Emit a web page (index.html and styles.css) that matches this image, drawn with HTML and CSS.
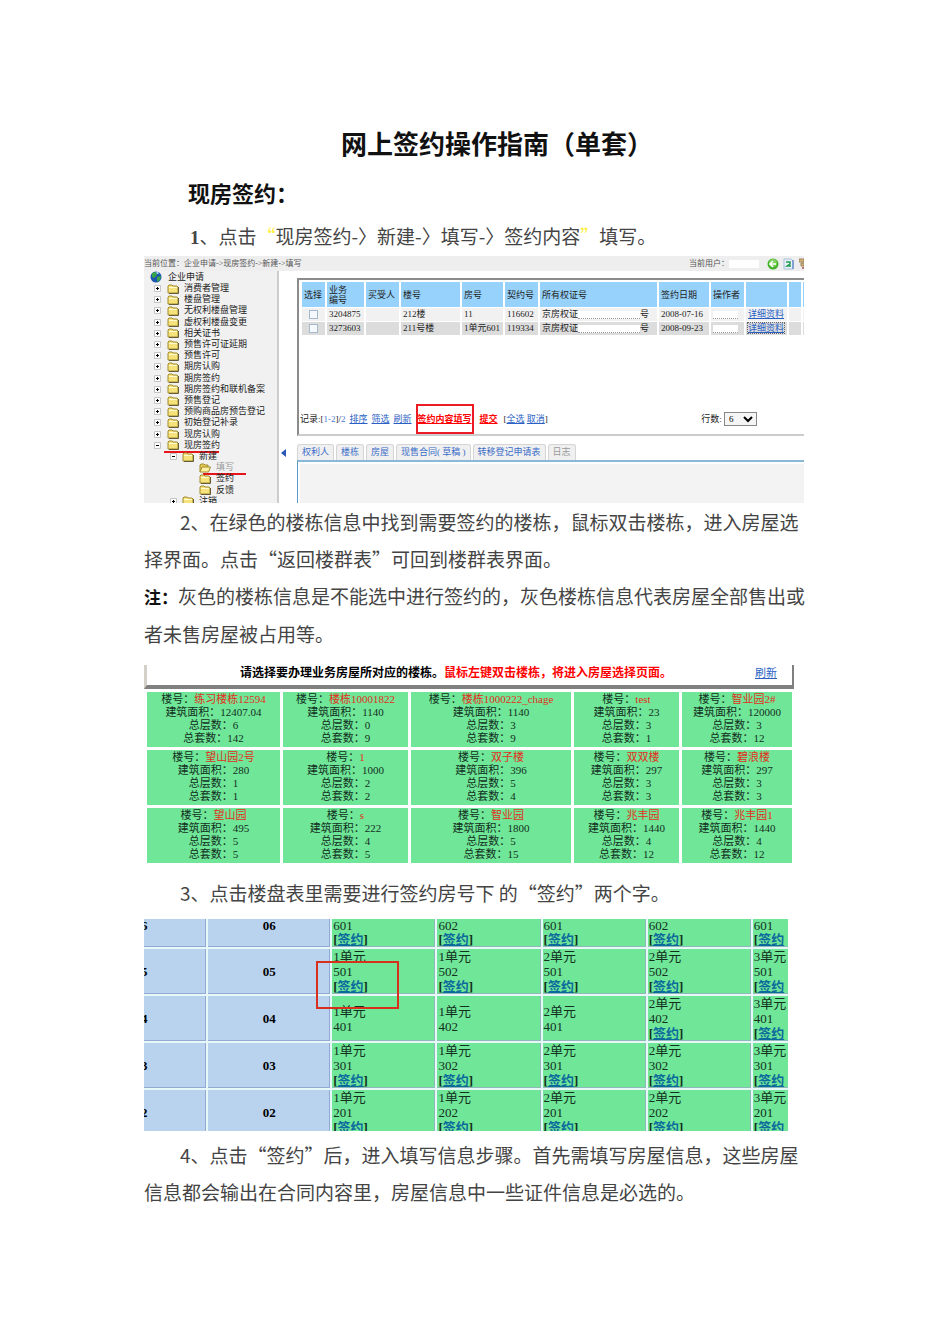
FILE: index.html
```html
<!DOCTYPE html>
<html lang="zh-CN">
<head>
  <meta charset="UTF-8" />
  <meta name="viewport" content="width=device-width, initial-scale=1.0" />
  <title>网上签约操作指南（单套）</title>
  <link rel="stylesheet" href="styles.css">
</head>
<body>
  <!-- shared icons -->
  <svg class="defs" width="0" height="0">
    <symbol id="folder" viewBox="0 0 12 10">
      <path d="M1 9V2l1-1h3l1 1h4l1 1v6z" fill="#f6e27a" stroke="#a08a2c"/>
      <path d="M2 3.5h8" stroke="#fffbd0"/>
      <path d="M11.5 3v6.5H2" fill="none" stroke="#4a4420" stroke-width=".8"/>
    </symbol>
    <symbol id="open" viewBox="0 0 12 10">
      <path d="M1 9V2l1-1h3l1 1h3v2" fill="#e8cc58" stroke="#a08a2c"/>
      <path d="M1 9l2-5h8.5L9.500 9z" fill="#fbf0a0" stroke="#a08a2c"/>
    </symbol>
    <symbol id="plus" viewBox="0 0 7 7">
      <path d="M.5.5h6v6h-6z" fill="#fff" stroke="#c4c4c4"/>
      <path d="M2 3.500h3M3.500 2v3" stroke="#000"/>
    </symbol>
    <symbol id="minus" viewBox="0 0 7 7">
      <path d="M.5.5h6v6h-6z" fill="#fff" stroke="#c4c4c4"/>
      <path d="M2 3.500h3" stroke="#000"/>
    </symbol>
  </svg>

  <main class="page">
    <h1>网上签约操作指南（单套）</h1>
    <h2>现房签约：</h2>
    <p class="step first"><b>1</b>、点击<span class="quote">“</span>现房签约-〉新建-〉填写-〉签约内容<span class="quote">”</span>填写。</p>

    <!-- system window -->
    <section class="app">
      <div class="topbar">
        <span class="crumb">当前位置：企业申请-&gt;现房签约-&gt;新建-&gt;填写</span>
        <span class="user">当前用户：<i class="mask name"></i></span>
        <svg width="12" height="12" viewBox="0 0 12 12"><circle cx="6" cy="6" r="5.500" fill="#43b02a"/><circle cx="6" cy="5" r="4" fill="#7cd15c"/><path d="M9 6H3.500M6 3L3 6l3 3" fill="none" stroke="#fff" stroke-width="1.600"/></svg>
        <svg width="12" height="12" viewBox="0 0 12 12"><path d="M1 1h7l2 2v8H1z" fill="#e8f2fc" stroke="#a9bfdc"/><path d="M3 4h4v2L4 8h4" fill="none" stroke="#239a50" stroke-width="1.500"/><path d="M10 2v9" stroke="#3a6dc0"/></svg>
        <svg width="5" height="12" viewBox="0 0 5 12"><path d="M0 1h5v3H0zM2 5h3v3H2z" fill="#dcb36c" stroke="#9b8464"/><path d="M3 9h2v2H3z" fill="#b77"/></svg>
      </div>
      <div class="work">
        <nav class="sidebar">
          <ul class="tree">
            <li class="root"><svg class="globe" viewBox="0 0 12 12"><circle cx="6" cy="6" r="5.500" fill="#1b55b0"/><path d="M2 2l4-1 1 3-3 3-2-1zM7 6l4-1-1 4-3 2z" fill="#35a548"/><path d="M6 1l2 0 1 2-2 0z" fill="#9fd4f0"/></svg>企业申请</li>
            <li><svg class="box"><use href="#plus"/></svg><svg class="dir"><use href="#folder"/></svg>消费者管理</li>
            <li><svg class="box"><use href="#plus"/></svg><svg class="dir"><use href="#folder"/></svg>楼盘管理</li>
            <li><svg class="box"><use href="#plus"/></svg><svg class="dir"><use href="#folder"/></svg>无权利楼盘管理</li>
            <li><svg class="box"><use href="#plus"/></svg><svg class="dir"><use href="#folder"/></svg>虚权利楼盘变更</li>
            <li><svg class="box"><use href="#plus"/></svg><svg class="dir"><use href="#folder"/></svg>相关证书</li>
            <li><svg class="box"><use href="#plus"/></svg><svg class="dir"><use href="#folder"/></svg>预售许可证延期</li>
            <li><svg class="box"><use href="#plus"/></svg><svg class="dir"><use href="#folder"/></svg>预售许可</li>
            <li><svg class="box"><use href="#plus"/></svg><svg class="dir"><use href="#folder"/></svg>期房认购</li>
            <li><svg class="box"><use href="#plus"/></svg><svg class="dir"><use href="#folder"/></svg>期房签约</li>
            <li><svg class="box"><use href="#plus"/></svg><svg class="dir"><use href="#folder"/></svg>期房签约和联机备案</li>
            <li><svg class="box"><use href="#plus"/></svg><svg class="dir"><use href="#folder"/></svg>预售登记</li>
            <li><svg class="box"><use href="#plus"/></svg><svg class="dir"><use href="#folder"/></svg>预购商品房预告登记</li>
            <li><svg class="box"><use href="#plus"/></svg><svg class="dir"><use href="#folder"/></svg>初始登记补录</li>
            <li><svg class="box"><use href="#plus"/></svg><svg class="dir"><use href="#folder"/></svg>现房认购</li>
            <li class="marked"><svg class="box"><use href="#minus"/></svg><svg class="dir"><use href="#folder"/></svg>现房签约</li>
            <li class="sub"><svg class="box"><use href="#minus"/></svg><svg class="dir"><use href="#folder"/></svg>新建</li>
            <li class="leaf marked current"><svg class="dir"><use href="#open"/></svg>填写</li>
            <li class="leaf"><svg class="dir"><use href="#folder"/></svg>签约</li>
            <li class="leaf"><svg class="dir"><use href="#folder"/></svg>反馈</li>
            <li class="sub"><svg class="box"><use href="#plus"/></svg><svg class="dir"><use href="#folder"/></svg>注销</li>
          </ul>
        </nav>
        <div class="handle"><svg width="5" height="8" viewBox="0 0 5 8"><path d="M5 0v8L0 4z" fill="#2a56b8"/></svg></div>
        <div class="content">
          <div class="panel">
            <table class="records">
              <colgroup><col class="w23"><col class="w37"><col class="w33"><col class="w59"><col class="w41"><col class="w33"><col class="w117"><col class="w50"><col class="w33"><col class="w41"><col class="w12"><col class="w12"></colgroup>
              <thead>
                <tr><th>选择</th><th>业务<br>编号</th><th>买受人</th><th>楼号</th><th>房号</th><th>契约号</th><th>所有权证号</th><th>签约日期</th><th>操作者</th><th></th><th></th><th></th></tr>
              </thead>
              <tbody>
                <tr><td class="pick"><input type="checkbox" aria-label="选择 3204875"></td><td>3204875</td><td></td><td>212楼</td><td>11</td><td>116602</td><td>京房权证<i class="mask cert"></i>号</td><td>2008-07-16</td><td><i class="mask who"></i></td><td class="more"><a href="#">详细资料</a></td><td></td><td></td></tr>
                <tr><td class="pick"><input type="checkbox" aria-label="选择 3273603"></td><td>3273603</td><td></td><td>211号楼</td><td>1单元601</td><td>119334</td><td>京房权证<i class="mask cert"></i>号</td><td>2008-09-23</td><td><i class="mask who"></i></td><td class="more"><a class="focus" href="#">详细资料</a></td><td></td><td></td></tr>
              </tbody>
            </table>
            <div class="actions">
              <span>记录:[<em>1-2</em>]/<em>2</em></span>
              <a href="#">排序</a><a href="#">筛选</a><a href="#">刷新</a>
              <a class="fill" href="#">签约内容填写</a>
              <a class="submit" href="#">提交</a>
              <span class="pickall">[<a href="#">全选</a> <a href="#">取消</a>]</span>
              <label class="rows">行数: <select><option>6</option></select></label>
            </div>
          </div>
          <div class="tabs">
            <button>权利人</button><button>楼栋</button><button>房屋</button><button>现售合同( 草稿 )</button><button>转移登记申请表</button><button class="off">日志</button>
          </div>
          <div class="tabbody"></div>
        </div>
      </div>
    </section>

    <p class="step">2、在绿色的楼栋信息中找到需要签约的楼栋，鼠标双击楼栋，进入房屋选<br>择界面。点击“返回楼群表”可回到楼群表界面。</p>
    <p class="note"><b>注：</b>灰色的楼栋信息是不能选中进行签约的，灰色楼栋信息代表房屋全部售出或<br>者未售房屋被占用等。</p>

    <!-- building list -->
    <section class="buildings">
      <div class="hint">
        <strong>请选择要办理业务房屋所对应的楼栋。<span>鼠标左键双击楼栋，将进入房屋选择页面。</span></strong>
        <a href="#">刷新</a>
      </div>
      <table>
        <colgroup><col class="w133"><col class="w125"><col class="w160"><col class="w105"><col class="w110"></colgroup>
        <tr>
          <td>楼号：<em>练习楼栋12594</em><br>建筑面积：12407.04<br>总层数：6<br>总套数：142</td>
          <td>楼号：<em>楼栋10001822</em><br>建筑面积：1140<br>总层数：0<br>总套数：9</td>
          <td>楼号：<em>楼栋1000222_chage</em><br>建筑面积：1140<br>总层数：3<br>总套数：9</td>
          <td>楼号：<em>test</em><br>建筑面积：23<br>总层数：3<br>总套数：1</td>
          <td>楼号：<em>智业园2#</em><br>建筑面积：120000<br>总层数：3<br>总套数：12</td>
        </tr>
        <tr>
          <td>楼号：<em>望山园2号</em><br>建筑面积：280<br>总层数：1<br>总套数：1</td>
          <td>楼号：<em>1</em><br>建筑面积：1000<br>总层数：2<br>总套数：2</td>
          <td>楼号：<em>双子楼</em><br>建筑面积：396<br>总层数：5<br>总套数：4</td>
          <td>楼号：<em>双双楼</em><br>建筑面积：297<br>总层数：3<br>总套数：3</td>
          <td>楼号：<em>碧浪楼</em><br>建筑面积：297<br>总层数：3<br>总套数：3</td>
        </tr>
        <tr>
          <td>楼号：<em>望山园</em><br>建筑面积：495<br>总层数：5<br>总套数：5</td>
          <td>楼号：<em>s</em><br>建筑面积：222<br>总层数：4<br>总套数：5</td>
          <td>楼号：<em>智业园</em><br>建筑面积：1800<br>总层数：5<br>总套数：15</td>
          <td>楼号：<em>兆丰园</em><br>建筑面积：1440<br>总层数：4<br>总套数：12</td>
          <td>楼号：<em>兆丰园1</em><br>建筑面积：1440<br>总层数：4<br>总套数：12</td>
        </tr>
      </table>
    </section>

    <p class="step">3、点击楼盘表里需要进行签约房号下 的“签约”两个字。</p>

    <!-- rooms of one building -->
    <section class="rooms">
      <table>
        <colgroup><col class="w62"><col class="w122"><col class="w103"><col class="w103"><col class="w103"><col class="w103"><col class="w103"></colgroup>
        <tr class="top"><th class="edge">6</th><th>06</th><td>601<br><b>[<a href="#">签约</a>]</b></td><td>602<br><b>[<a href="#">签约</a>]</b></td><td>601<br><b>[<a href="#">签约</a>]</b></td><td>602<br><b>[<a href="#">签约</a>]</b></td><td>601<br><b>[<a href="#">签约</a></b></td></tr>
        <tr><th class="edge">5</th><th>05</th><td>1单元<br>501<br><b>[<a href="#">签约</a>]</b></td><td>1单元<br>502<br><b>[<a href="#">签约</a>]</b></td><td>2单元<br>501<br><b>[<a href="#">签约</a>]</b></td><td>2单元<br>502<br><b>[<a href="#">签约</a>]</b></td><td>3单元<br>501<br><b>[<a href="#">签约</a></b></td></tr>
        <tr><th class="edge">4</th><th>04</th><td>1单元<br>401</td><td>1单元<br>402</td><td>2单元<br>401</td><td>2单元<br>402<br><b>[<a href="#">签约</a>]</b></td><td>3单元<br>401<br><b>[<a href="#">签约</a></b></td></tr>
        <tr><th class="edge">3</th><th>03</th><td>1单元<br>301<br><b>[<a href="#">签约</a>]</b></td><td>1单元<br>302<br><b>[<a href="#">签约</a>]</b></td><td>2单元<br>301<br><b>[<a href="#">签约</a>]</b></td><td>2单元<br>302<br><b>[<a href="#">签约</a>]</b></td><td>3单元<br>301<br><b>[<a href="#">签约</a></b></td></tr>
        <tr><th class="edge">2</th><th>02</th><td>1单元<br>201<br><b>[<a href="#">签约</a>]</b></td><td>1单元<br>202<br><b>[<a href="#">签约</a>]</b></td><td>2单元<br>201<br><b>[<a href="#">签约</a>]</b></td><td>2单元<br>202<br><b>[<a href="#">签约</a>]</b></td><td>3单元<br>201<br><b>[<a href="#">签约</a></b></td></tr>
      </table>
      <div class="frame"></div>
    </section>

    <p class="step last">4、点击“签约”后，进入填写信息步骤。首先需填写房屋信息，这些房屋<br>信息都会输出在合同内容里，房屋信息中一些证件信息是必选的。</p>
  </main>
</body>
</html>
```

FILE: styles.css
```css
* {
  box-sizing: border-box;
}
body {
  margin: 0;
  background: #fff;
  color: #444;
  font-family: "Noto Sans CJK SC", sans-serif;
}
em, i {
  font-style: normal;
}
.defs {
  position: absolute;
}
.page {
  padding: 122px 146px 120px 144px;
}
h1 {
  margin: 0;
  padding-left: 46px;
  text-align: center;
  font-size: 26px;
  line-height: 42px;
  color: #111;
}
h2 {
  margin: 6px 0 0;
  padding-left: 44px;
  font-size: 22px;
  line-height: 44px;
  color: #111;
}
.step, .note {
  margin: 0;
  font-size: 19px;
  line-height: 37px;
  white-space: nowrap;
}
.step {
  text-indent: 36px;
}
.step.first {
  margin-top: 3px;
  text-indent: 46px;
}
.step b {
  font-family: "Liberation Serif", serif;
}
.note b {
  color: #111;
  font-size: 17px;
}
.quote {
  color: #ffee38;
}
.mask {
  display: inline-block;
  height: 8px;
  background: #fff;
  border-bottom: 1px dotted #999;
  vertical-align: middle;
}
.name { width: 30px; border-bottom: 0; }
.cert { width: 62px; }
.who { width: 25px; }

/* system window */
.app {
  height: 247px;
  overflow: hidden;
  font-family: "Liberation Serif", "Noto Sans CJK SC", serif;
  font-size: 9px;
  line-height: 11px;
  color: #222;
}
.topbar {
  display: flex;
  align-items: center;
  gap: 4px;
  height: 15px;
  background: #eee;
  color: #555;
  font-size: 8px;
  white-space: nowrap;
}
.user {
  margin-left: auto;
  margin-right: 4px;
}
.work {
  display: flex;
  height: 232px;
}
.sidebar {
  flex: 0 0 135px;
  overflow: hidden;
  background: #f1f1f1;
  border-right: 2px solid #ccc;
}
.tree {
  display: grid;
  grid-auto-rows: 1fr;
  height: 236px;
  margin: 0;
  padding: 0;
  list-style: none;
}
.tree li {
  position: relative;
  display: flex;
  align-items: center;
  padding-left: 10px;
  white-space: nowrap;
}
.tree .root { padding-left: 6px; }
.tree .sub { padding-left: 26px; }
.tree .leaf { padding-left: 55px; }
.tree .current { color: #999; }
.box {
  width: 7px;
  height: 7px;
  margin-right: 6px;
}
.dir {
  width: 12px;
  height: 10px;
  margin-right: 5px;
}
.sub .box {
  margin-right: 5px;
}
.globe {
  width: 12px;
  height: 12px;
  margin-right: 6px;
}
.marked::after {
  content: "";
  position: absolute;
  left: 20px;
  bottom: -2px;
  width: 55px;
  height: 2px;
  background: #e8141c;
}
.leaf.marked::after {
  left: 59px;
  width: 43px;
}
.handle {
  display: flex;
  flex: 0 0 18px;
  padding: 178px 0 0 2px;
}
.content {
  flex: 1;
  min-width: 0;
}
.panel {
  display: flex;
  flex-direction: column;
  height: 158px;
  margin-top: 7px;
  overflow: hidden;
  border-top: 2px solid #8c8c8c;
  border-left: 2px solid #8c8c8c;
  border-bottom: 2px solid #ccc;
}
.records {
  width: 517px;
  margin: 1px 0 0 1px;
  table-layout: fixed;
  border-spacing: 2px 1px;
}
.records th {
  height: 25px;
  padding: 0 2px;
  background: #96d2fc;
  font-weight: normal;
  line-height: 10px;
  text-align: left;
  white-space: nowrap;
}
.records td {
  height: 13px;
  padding: 0 2px;
  background: #f1f1f1;
  white-space: nowrap;
}
.records tr:nth-child(2) td {
  background: #dcdcdc;
}
.records .pick {
  text-align: center;
}
.pick input {
  width: 9px;
  height: 9px;
  margin: 0;
  appearance: none;
  background: #f5f9fd;
  border: 1px solid #a5b8cc;
  vertical-align: middle;
}
.w23 { width: 23px; }
.w37 { width: 37px; }
.w33 { width: 33px; }
.w59 { width: 59px; }
.w41 { width: 41px; }
.w117 { width: 117px; }
.w50 { width: 50px; }
.w12 { width: 12px; }
.app a {
  color: #2a5fc4;
}
.app em {
  color: #4a7bd0;
}
.focus {
  outline: 1px dotted #666;
}
.actions {
  display: flex;
  align-items: center;
  gap: 4px;
  height: 30px;
  margin-top: auto;
  padding-left: 1px;
  white-space: nowrap;
}
.app .fill, .app .submit {
  color: #f00;
  font-weight: bold;
}
.fill {
  display: flex;
  align-items: center;
  height: 30px;
  border: 2px solid #ec1c24;
}
.submit {
  margin: 0 2px;
}
.rows {
  margin: 0 47px 0 auto;
}
.rows select {
  width: 33px;
  height: 14px;
  padding: 0;
  background: #f5f5f5;
  border: 1px solid #888;
  font: inherit;
}
.tabs {
  display: flex;
  gap: 2px;
  height: 16px;
  margin-top: 8px;
}
.tabs button {
  padding: 0 4px;
  background: #f0f0f0;
  border: 1px solid #d5d5d5;
  border-bottom: 0;
  border-radius: 3px 3px 0 0;
  color: #3a6cc8;
  font: inherit;
  white-space: nowrap;
}
.tabs .off {
  color: #999;
}
.tabbody {
  height: 60px;
  background: #f3f3f3;
  border-top: 2px solid #8ab8d8;
  border-left: 1px solid #5a9cc8;
  box-shadow: inset 2px 2px #fff;
}

/* building list */
.buildings {
  margin-top: 13px;
  overflow: hidden;
  font-family: "Liberation Serif", "Noto Sans CJK SC", serif;
  font-size: 11px;
  line-height: 13px;
  color: #12301e;
}
.hint {
  display: flex;
  align-items: center;
  height: 24px;
  margin-right: 10px;
  padding: 0 15px 4px 93px;
  border: solid #808080;
  border-width: 0 2px 4px 3px;
  border-left-color: #d4d0c8;
  color: #000;
  font-size: 12px;
  white-space: nowrap;
}
.hint span {
  color: #f00;
}
.hint a {
  margin-left: auto;
  color: #2a5fc4;
  font-size: 11px;
}
.buildings table {
  width: 651px;
  table-layout: fixed;
  border-spacing: 3px;
}
.buildings td {
  height: 55px;
  padding: 0 0 2px;
  background: #70e698;
  text-align: center;
  white-space: nowrap;
}
.buildings em {
  color: #e0301c;
}
.w133 { width: 133px; }
.w125 { width: 125px; }
.w160 { width: 160px; }
.w105 { width: 105px; }
.w110 { width: 110px; }
.buildings + .step {
  margin: 8px 0;
}

/* rooms */
.rooms {
  position: relative;
  height: 212px;
  margin-right: 16px;
  overflow: hidden;
  background: #e6f8f8;
  font-family: "Liberation Serif", "Noto Sans CJK SC", serif;
  font-size: 13px;
  line-height: 15px;
  color: #12301e;
}
.rooms table {
  width: 716px;
  margin: -2px 0 0 -2px;
  table-layout: fixed;
  border-spacing: 2px;
}
.rooms td, .rooms th {
  height: 45px;
  padding: 0 1px;
  overflow: hidden;
  white-space: nowrap;
}
.rooms td {
  background: #70e698;
  box-shadow: inset -1px -1px #8fb8b8;
}
.rooms th {
  background: #b9d3ef;
  box-shadow: inset -1px -1px #93a9d4;
  color: #000;
}
.rooms .edge {
  padding: 0;
  text-align: left;
  text-indent: -3px;
}
.rooms .top td, .rooms .top th {
  height: 28px;
  line-height: 14px;
}
.rooms .top th {
  padding-bottom: 14px;
}
.rooms a {
  color: #0b6a9c;
}
.w62 { width: 62px; }
.w122 { width: 122px; }
.w103 { width: 103px; }
/* red frame over the 501 cell */
.frame {
  position: absolute;
  left: 172px;
  top: 42px;
  width: 83px;
  height: 48px;
  border: 2px solid #d8301c;
}
.step.last {
  margin-top: 5px;
}
```
